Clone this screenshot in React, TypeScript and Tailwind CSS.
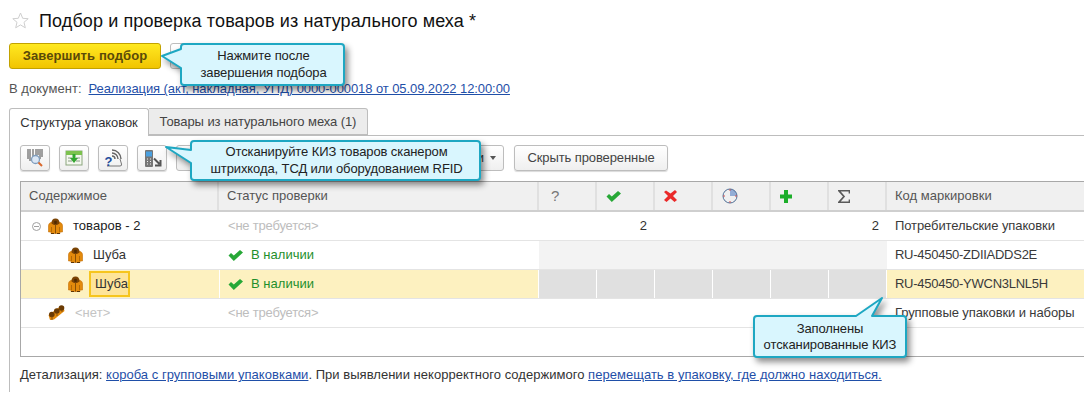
const Jacket = () => (
  <svg width="15" height="16" viewBox="0 0 15 16" className="shrink-0">
    <path d="M0.500 14V7.500Q0.500 5 4 4L11 4Q14.500 5 14.500 7.500V14H12V15.500H3V14Z" fill="#e38a0c" stroke="#c46f06" strokeWidth="0.6" />
    <path d="M3.500 5.500Q3.500 0.500 7.500 0.500Q11.500 0.500 11.500 5.500L9 7H6Z" fill="#7a4304" />
    <path d="M6 3.500Q7.500 2 9 3.500L8.500 6H6.500Z" fill="#4f2a02" />
    <path d="M7.500 6.500V15.500" stroke="#8a5006" strokeWidth="1" />
    <path d="M3.500 9V14M11.500 9V14" stroke="#a86206" strokeWidth="0.8" />
    <path d="M3 15.500H6M9 15.500H12" stroke="#5c3403" strokeWidth="1" />
  </svg>
);

const Bundle = () => (
  <svg width="17" height="16" viewBox="0 0 17 16" className="shrink-0">
    <path d="M0.500 10L10 3L15 1L16.500 6L6 14.500L2 15Z" fill="#e38a0c" />
    <circle cx="3.800" cy="9.500" r="2.800" fill="#6b3b04" />
    <circle cx="8.800" cy="6" r="2.800" fill="#6b3b04" />
    <circle cx="13.500" cy="3" r="2.800" fill="#6b3b04" />
    <path d="M4 15V11.500M9 11V8.500M14 7V5.500" stroke="#8a5006" strokeWidth="1" />
  </svg>
);

const Check = ({ className = "" }: { className?: string }) => (
  <svg width="15" height="11" viewBox="0 0 15 11" className={`shrink-0 ${className}`}>
    <path d="M0.500 5.500L3 3L5.800 5.500L12 0L15 2.500L5.800 11Z" fill="#27a837" />
  </svg>
);

const HeaderIcons = [
  <Check />,
  <svg width="13" height="12" viewBox="0 0 13 12">
    <path d="M2 0.500L6.500 3.500L11 0L13 2L9 6L13 10L10.500 12L6.500 8.500L2.500 12L0 10L4 6L0 2Z" fill="#ea2a2a" />
  </svg>,
  <svg width="16" height="16" viewBox="0 0 16 16">
    <path d="M8 8V1A7 7 0 0 1 15 8Z" fill="#93add6" />
    <circle cx="8" cy="8" r="7" fill="none" stroke="#4f6f96" strokeWidth="1" />
    <path d="M8 1V3M8 13V15M1 8H3M13 8H15" stroke="#d05050" strokeWidth="1" />
  </svg>,
  <svg width="12" height="13" viewBox="0 0 12 13">
    <path d="M4 0H8V4.500H12V8.500H8V13H4V8.500H0V4.500H4Z" fill="#1cae2a" />
  </svg>,
  <svg width="12" height="13" viewBox="0 0 12 13">
    <path d="M11.500 3.500V0.750H1L6 6.500L1 12.250H11.500V9.500" fill="none" stroke="#5a5a5a" strokeWidth="1.700" />
  </svg>,
];

const cellGrid = "grid grid-cols-[198px_320px_58px_58px_58px_58px_58px_58px_1fr]";

const ToolButton = ({ children }: { children: React.ReactNode }) => (
  <button className="w-[30px] h-[26px] flex items-center justify-center rounded-[3px] border border-[#bdbdbd] bg-gradient-to-b from-white to-[#efefef] shadow-[0_1px_1px_rgba(0,0,0,0.15)]">
    {children}
  </button>
);

const Row = ({
  left,
  status,
  code,
  counts,
  grayCells,
  selected,
}: {
  left: React.ReactNode;
  status: React.ReactNode;
  code: string;
  counts?: boolean;
  grayCells?: "merged" | "split";
  selected?: boolean;
}) => (
  <div className={`${cellGrid} h-[29px] border-b border-[#e4e4e4] ${selected ? "bg-[#fdf1c0]" : ""}`}>
    <div className="flex items-center h-full">{left}</div>
    <div className={`flex items-center pl-[8px] border-l border-white ${selected ? "border-r" : ""}`}>{status}</div>
    {grayCells === "merged" && <div className="col-span-6 bg-[#f3f3f3]" />}
    {grayCells === "split" &&
      [0, 1, 2, 3, 4, 5].map((i) => (
        <div key={i} className="bg-[#e0e0e0] border-r border-white" />
      ))}
    {!grayCells &&
      [0, 1, 2, 3, 4, 5].map((i) => (
        <div key={i} className="flex items-center justify-end pr-[8px] text-[#333]">
          {counts && (i === 1 || i === 5) ? "2" : ""}
        </div>
      ))}
    <div className={`flex items-center pl-[8px] whitespace-nowrap text-[#3a3a3a] ${grayCells ? "tracking-[-0.27px]" : "tracking-[-0.1px]"}`}>
      {code}
    </div>
  </div>
);

const InStock = () => (
  <div className="flex items-center gap-[8px] text-[#1f8f2c]">
    <Check />
    В наличии
  </div>
);

const NotNeeded = () => <span className="text-[#bdbdbd] tracking-[-0.2px]">&lt;не требуется&gt;</span>;

const Callout = ({
  box,
  viewBox,
  path,
  w,
  h,
  text,
}: {
  box: string;
  viewBox: string;
  path: string;
  w: number;
  h: number;
  text: React.ReactNode;
}) => (
  <div className={`absolute ${box} flex items-center justify-center text-center text-[#222] leading-[16.500px] tracking-[-0.1px] whitespace-nowrap`}>
    <svg
      width={w}
      height={h}
      viewBox={viewBox}
      className="absolute left-0 top-0 overflow-visible drop-shadow-[3px_4px_3px_rgba(0,0,0,0.45)]"
    >
      <path d={path} fill="#d9f6fe" stroke="#1ea7c2" strokeWidth="2" strokeLinejoin="round" />
    </svg>
    {text}
  </div>
);

export default function App() {
  return (
    <div className="relative w-[1084px] h-[402px] overflow-hidden bg-white text-[13px] tracking-[0.03px] text-[#333] font-['Liberation_Sans',Arial,sans-serif]">
      <div className="h-[43px] flex items-start pl-[12px] pt-[11px]">
        <svg width="17" height="17" viewBox="0 0 17 17" className="mt-[1px]">
          <path d="M8.500 1L10.700 6.300L16.200 6.700L12 10.300L13.300 15.800L8.500 12.900L3.700 15.800L5 10.300L0.800 6.700L6.300 6.300Z" fill="none" stroke="#cfcfcf" strokeWidth="1" />
        </svg>
        <h1 className="ml-[10px] text-[18px] leading-[20px] tracking-[0.11px] text-[#111] whitespace-nowrap">
          Подбор и проверка товаров из натурального меха *
        </h1>
      </div>

      <div className="flex ml-[9px] gap-[9px] h-[26px]">
        <button className="w-[152px] rounded-[3px] border border-[#c2a200] bg-gradient-to-b from-[#ffe91f] to-[#f1c400] text-[13px] font-bold tracking-[0.1px] text-[#5a4a08]">
          Завершить подбор
        </button>
        <button className="w-[60px] rounded-[3px] border border-[#bdbdbd] bg-gradient-to-b from-white to-[#efefef]" />
      </div>

      <div className="flex ml-[9px] mt-[12px] h-[16px] items-center">
        <span className="text-[#555]">В документ:</span>
        <a className="ml-[7px] text-[#1f4fa8] underline whitespace-nowrap tracking-[-0.08px]">
          Реализация (акт, накладная, УПД) 0000-000018 от 05.09.2022 12:00:00
        </a>
      </div>

      <div className="flex ml-[9px] mt-[11px] h-[28px] relative z-10 tracking-[-0.08px]">
        <div className="w-[140px] h-[28px] flex items-center justify-center bg-white border border-b-0 border-[#bdbdbd] rounded-t-[3px] text-[#333]">
          Структура упаковок
        </div>
        <div className="w-[219px] h-[27px] flex items-center justify-center bg-[#ececec] border border-l-0 border-[#bdbdbd] rounded-tr-[3px] text-[#444]">
          Товары из натурального меха (1)
        </div>
      </div>

      <div className="ml-[9px] -mt-[1px] h-[257px] border-l border-t border-[#bdbdbd] pl-[10px]">
        <div className="flex mt-[9px] h-[26px] gap-[9px]">
          <ToolButton>
            <svg width="18" height="20" viewBox="0 0 18 20">
              <path d="M2 1V11M4 1V13M7 1V11M10 1V7M12 1V7M14 1V11M16 1V9" stroke="#444" strokeWidth="1" />
              <circle cx="9.500" cy="11.500" r="4" fill="#dbe7f5" stroke="#7f9dbd" strokeWidth="1.300" />
              <path d="M12.500 14.500L16 18" stroke="#d9682c" strokeWidth="2" />
            </svg>
          </ToolButton>
          <ToolButton>
            <svg width="18" height="16" viewBox="0 0 18 16">
              <rect x="1" y="1" width="16" height="14" fill="#f4f8ef" stroke="#8ca67e" strokeWidth="1" />
              <rect x="1" y="1" width="16" height="4" fill="#7cc24e" />
              <path d="M3 8H7M3 11H7M11 11H15M11 8H15" stroke="#8a9a84" strokeWidth="1" />
              <path d="M7.500 4H10.500V8H13L9 13L5 8H7.500Z" fill="#32a52f" />
            </svg>
          </ToolButton>
          <ToolButton>
            <svg width="20" height="20" viewBox="0 0 20 20">
              <path d="M4 18H17Q19 18 18.500 16L17 11" fill="none" stroke="#777" strokeWidth="1" />
              <path d="M9 8A3 3 0 0 1 12 11M9 5A6 6 0 0 1 15 11M9 2A9 9 0 0 1 18 11" fill="none" stroke="#666" strokeWidth="1.400" />
              <text x="1.500" y="18" fontSize="13" fontWeight="700" fill="#234c9c" fontFamily="Liberation Sans">?</text>
            </svg>
          </ToolButton>
          <ToolButton>
            <svg width="20" height="19" viewBox="0 0 20 19">
              <rect x="3" y="1" width="8" height="17" rx="1" fill="#767676" />
              <rect x="4" y="2.500" width="6" height="5" fill="#4aa0e0" />
              <path d="M5 10H6M8 10H9M5 12.500H6M8 12.500H9M5 15H6M8 15H9" stroke="#eee" strokeWidth="1.200" />
              <path d="M12 9.500L17.500 15M18.500 11V16.500H13" fill="none" stroke="#555" strokeWidth="2" />
            </svg>
          </ToolButton>
          <button className="w-[328px] flex items-center justify-end gap-[6px] pr-[7px] rounded-[3px] border border-[#bdbdbd] bg-gradient-to-b from-white to-[#efefef] text-[#444] whitespace-nowrap">
            и
            <span className="w-0 h-0 border-l-[3px] border-r-[3px] border-t-[4px] border-l-transparent border-r-transparent border-t-[#555]" />
          </button>
          <button className="ml-[1px] w-[154px] rounded-[3px] border border-[#bdbdbd] bg-gradient-to-b from-white to-[#efefef] text-[#444] tracking-[-0.1px] shadow-[0_1px_1px_rgba(0,0,0,0.15)] whitespace-nowrap">
            Скрыть проверенные
          </button>
        </div>

        <div className="mt-[10px] h-[176px] w-[1070px] border border-r-0 border-[#a8a8a8]">
          <div className={`${cellGrid} h-[30px] bg-[#f0f0f0] border-b-2 border-[#cfcfcf] text-[#555]`}>
            <div className="flex items-center pl-[8px] border-r-2 border-[#e0e0e0]">Содержимое</div>
            <div className="flex items-center pl-[8px] border-r-2 border-[#e0e0e0]">Статус проверки</div>
            <div className="flex items-center pl-[12px] border-r-2 border-[#e0e0e0] text-[15px] text-[#777]">?</div>
            {HeaderIcons.map((icon, i) => (
              <div key={i} className="flex items-center pl-[9px] border-r-2 border-[#e0e0e0]">
                {icon}
              </div>
            ))}
            <div className="flex items-center pl-[8px]">Код маркировки</div>
          </div>

          <Row
            left={
              <div className="flex items-center pl-[11px]">
                <svg width="9" height="9" viewBox="0 0 9 9">
                  <circle cx="4.500" cy="4.500" r="4" fill="none" stroke="#a0a0a0" strokeWidth="1" />
                  <path d="M2 4.500H7" stroke="#a0a0a0" strokeWidth="1" />
                </svg>
                <div className="ml-[7px]"><Jacket /></div>
                <span className="ml-[10px] text-[#222]">товаров - 2</span>
              </div>
            }
            status={<NotNeeded />}
            code="Потребительские упаковки"
            counts
          />
          <Row
            left={
              <div className="flex items-center pl-[47px]">
                <Jacket />
                <span className="ml-[10px] text-[#333]">Шуба</span>
              </div>
            }
            status={<InStock />}
            code="RU-450450-ZDIIADDS2E"
            grayCells="merged"
          />
          <Row
            left={
              <div className="flex items-center pl-[47px]">
                <Jacket />
                <span className="ml-[6px] w-[41px] h-[26px] flex items-center pl-[4px] bg-[#fde49a] border-2 border-[#f6c51e] text-[#333]">
                  Шуба
                </span>
              </div>
            }
            status={<InStock />}
            code="RU-450450-YWCN3LNL5H"
            grayCells="split"
            selected
          />
          <Row
            left={
              <div className="flex items-center pl-[27px]">
                <Bundle />
                <span className="ml-[10px] text-[#c4c4c4]">&lt;нет&gt;</span>
              </div>
            }
            status={<NotNeeded />}
            code="Групповые упаковки и наборы"
          />
        </div>

        <div className="mt-[10px] whitespace-nowrap text-[#333] leading-[16px]">
          Детализация: <a className="text-[#1f4fa8] underline">короба с групповыми упаковками</a>. При выявлении
          некорректного содержимого <a className="text-[#1f4fa8] underline">перемещать в упаковку, где должно находиться.</a>
        </div>
      </div>

      <Callout
        box="left-[160px] top-[42px] w-[186px] h-[45px] pl-[21px]"
        viewBox="160 42 186 45"
        w={186}
        h={45}
        path="M184 44H341Q344 44 344 47V82Q344 85 341 85H184Q181 85 181 82V68L162 56L181 49V47Q181 44 184 44Z"
        text={<div className="relative">Нажмите после<br />завершения подбора</div>}
      />
      <Callout
        box="left-[165px] top-[139px] w-[317px] h-[43px] pl-[26px]"
        viewBox="165 139 317 43"
        w={317}
        h={43}
        path="M194 141H477Q480 141 480 144V177Q480 180 477 180H194Q191 180 191 177V163L166 147L191 150V144Q191 141 194 141Z"
        text={<div className="relative">Отсканируйте КИЗ товаров сканером<br />штрихкода, ТСД или оборудованием RFID</div>}
      />
      <Callout
        box="left-[753px] top-[296px] w-[154px] h-[62px] pt-[20px]"
        viewBox="753 296 154 62"
        w={154}
        h={62}
        path="M757 316H856L882 298L872 316H903Q906 316 906 319V354Q906 357 903 357H757Q754 357 754 354V319Q754 316 757 316Z"
        text={<div className="relative">Заполнены<br />отсканированные КИЗ</div>}
      />
    </div>
  );
}
